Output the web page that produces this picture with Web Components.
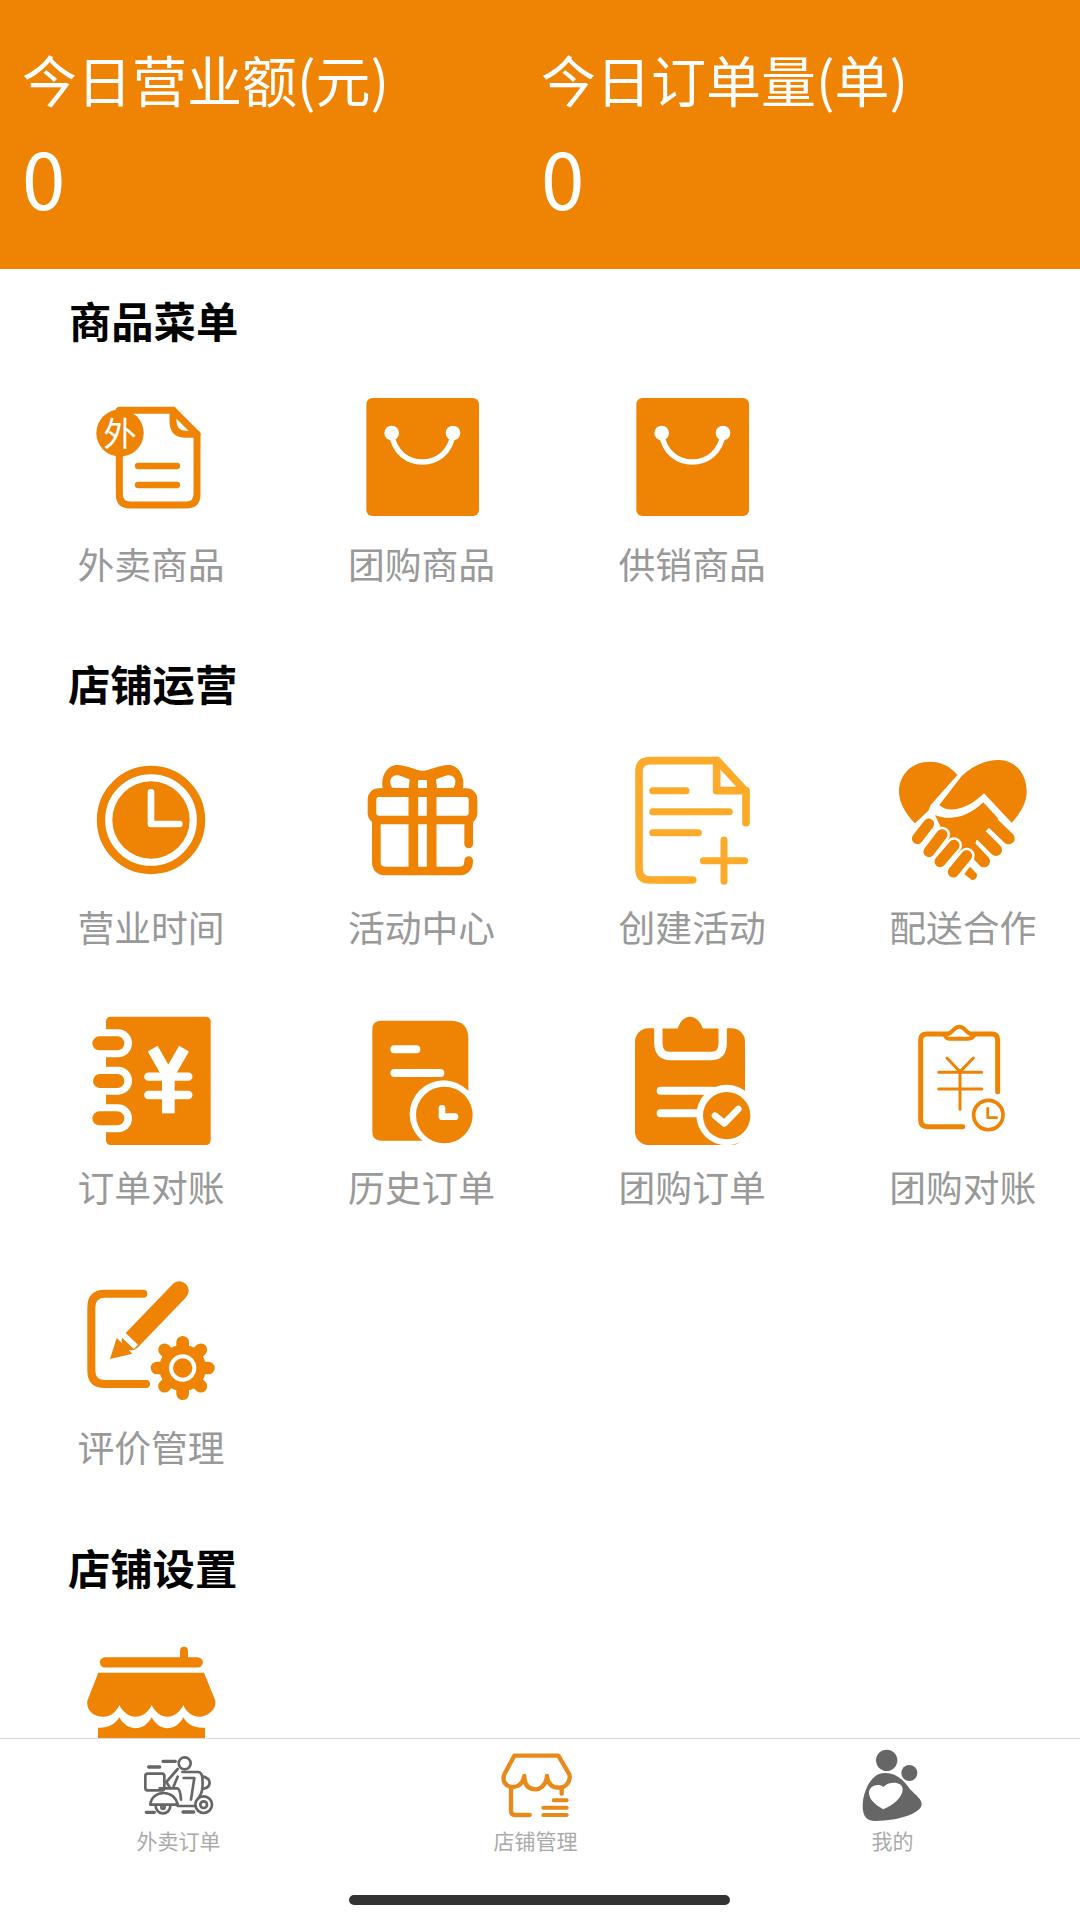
<!DOCTYPE html>
<html lang="zh-CN">
<head>
<meta charset="utf-8">
<title>店铺管理</title>
<style>
  html, body { margin: 0; padding: 0; background: #fff; }
  body { font-family: "Noto Sans CJK SC", "Noto Sans", sans-serif; }
</style>
</head>
<body>
<shop-app>
  <stat-bar slot="top">
    <stat-cell label="今日营业额(元)" value="0"></stat-cell>
    <stat-cell label="今日订单量(单)" value="0"></stat-cell>
  </stat-bar>

  <menu-section heading="商品菜单" style="--title-left:69px;--top:21px;--grid-top:42px">
    <menu-item label="外卖商品"><app-icon name="takeout"></app-icon></menu-item>
    <menu-item label="团购商品"><app-icon name="bag"></app-icon></menu-item>
    <menu-item label="供销商品"><app-icon name="bag"></app-icon></menu-item>
  </menu-section>

  <menu-section heading="店铺运营" style="--top:65px;--grid-top:42px">
    <menu-item label="营业时间"><app-icon name="clock"></app-icon></menu-item>
    <menu-item label="活动中心"><app-icon name="gift"></app-icon></menu-item>
    <menu-item label="创建活动"><app-icon name="newdoc"></app-icon></menu-item>
    <menu-item label="配送合作"><app-icon name="shake"></app-icon></menu-item>
    <menu-item label="订单对账"><app-icon name="ledger"></app-icon></menu-item>
    <menu-item label="历史订单"><app-icon name="history"></app-icon></menu-item>
    <menu-item label="团购订单"><app-icon name="clipcheck"></app-icon></menu-item>
    <menu-item label="团购对账"><app-icon name="clipyen"></app-icon></menu-item>
    <menu-item label="评价管理"><app-icon name="review"></app-icon></menu-item>
  </menu-section>

  <menu-section heading="店铺设置" style="--top:66px">
    <menu-item><app-icon name="store"></app-icon></menu-item>
  </menu-section>

  <tab-bar slot="bottom">
    <tab-item label="外卖订单"><app-icon name="scooter" w="80" h="70"></app-icon></tab-item>
    <tab-item label="店铺管理"><app-icon name="shopline" w="80" h="70"></app-icon></tab-item>
    <tab-item label="我的"><app-icon name="me" w="80" h="70"></app-icon></tab-item>
  </tab-bar>
</shop-app>

<script>
const ORANGE = '#ee8304'
const GREY = '#666'

// coordinates are taken from the 3x crops, so every viewBox is 390 wide for a 130 box
const ICONS = {
  takeout: ['0 0 390 390', `
    <g fill="none" stroke="${ORANGE}" stroke-width="21" stroke-linecap="round" stroke-linejoin="round">
      <path d="M100 55H261L333 127V307Q333 339 301 339H132Q100 339 100 307Z"/>
      <path d="M261 55V88Q261 127 300 127H333"/>
      <path d="M156 222H273M156 279H273" stroke-width="19"/>
    </g>
    <circle cx="102" cy="123" r="71" fill="${ORANGE}"/>
    <text x="102" y="161" font-size="100" text-anchor="middle" fill="#fff" font-family="Noto Sans CJK SC, sans-serif">外</text>`],
  bag: ['0 0 390 390', `
    <rect x="28" y="18" width="338" height="354" rx="18" fill="${ORANGE}"/>
    <path d="M103 123C112 186 156 210 196 210S280 186 289 123" fill="none" stroke="#fff" stroke-width="16"/>
    <circle cx="104" cy="123" r="22" fill="#fff"/><circle cx="288" cy="123" r="22" fill="#fff"/>`],
  clock: ['0 0 390 390', `
    <circle cx="195" cy="195" r="150" fill="none" stroke="${ORANGE}" stroke-width="25"/>
    <circle cx="195" cy="195" r="116" fill="${ORANGE}"/>
    <path d="M195 112V207H280" fill="none" stroke="#fff" stroke-width="20" stroke-linecap="round" stroke-linejoin="round"/>`],
  gift: ['890 45 390 390', `
    <path d="M970 157C955 105 985 75 1010 75C1040 75 1065 92 1087 92C1109 92 1135 75 1165 75C1190 75 1220 105 1205 157Z" fill="${ORANGE}"/>
    <path d="M995 143C982 120 995 105 1010 106C1020 106 1035 114 1048 118L1045 145Z" fill="#fff"/>
    <path d="M1180 143C1193 120 1180 105 1165 106C1155 106 1140 114 1127 118L1130 145Z" fill="#fff"/>
    <rect x="1073" y="120" width="27" height="25" rx="4" fill="#fff"/>
    <g fill="none" stroke="${ORANGE}" stroke-width="26" stroke-linecap="round" stroke-linejoin="round">
      <rect x="935" y="158" width="303" height="82" rx="20"/>
      <path d="M948 240V365Q948 393 976 393H1195Q1225 393 1225 362M1225 240V312"/>
      <path d="M1059 158V393M1114 158V393" stroke-linecap="butt" stroke-width="29"/>
    </g>`],
  newdoc: ['81 45 390 390', `
    <g fill="none" stroke="#fbab29" stroke-width="23" stroke-linecap="round" stroke-linejoin="round">
      <path d="M278 420H150Q117 420 117 387V95Q117 62 150 62H352L438 155V248"/>
      <path d="M350 62V152H438"/>
      <path d="M158 152H258M158 215H388M158 278H295" stroke-width="21"/>
      <path d="M372 300V424M310 362H434" stroke-width="21"/>
    </g>`],
  shake: ['894 45 390 390', `
    <g fill="${ORANGE}">
      <path d="M1072 105C1050 78 1020 65 990 65C935 65 897 105 897 155C897 190 920 225 945 250L985 212L992 195Z"/>
      <path d="M1085 108C1120 75 1160 60 1195 60C1245 60 1280 100 1280 155C1280 190 1260 220 1235 248L1152 160C1130 180 1110 198 1070 207C1050 211 1030 207 1018 195Z"/>
      <path d="M1005 225C1040 240 1095 240 1150 187L1195 236L1130 300L1100 372L1040 300Z"/>
    </g>
    <path d="M1160 232L1226 295M1122 264L1188 330M1088 296L1152 364" fill="none" stroke="${ORANGE}" stroke-width="36" stroke-linecap="round"/>
    <g fill="none" stroke-linecap="round">
      <path d="M986 252L952 296M1026 284L987 335M1062 316L1020 365M1100 347L1060 396" stroke="#fff" stroke-width="48"/>
      <path d="M986 252L952 296M1026 284L987 335M1062 316L1020 365M1100 347L1060 396" stroke="${ORANGE}" stroke-width="33"/>
    </g>
    <path d="M1093 402L1110 380L1131 402Q1132 420 1115 420Z" fill="${ORANGE}"/>`],
  ledger: ['78 45 390 390', `
    <rect x="138" y="50" width="314" height="385" rx="14" fill="${ORANGE}"/>
    <g fill="#fff"><rect x="100" y="88" width="116" height="84" rx="42"/><rect x="100" y="200" width="116" height="84" rx="42"/><rect x="100" y="313" width="116" height="84" rx="42"/></g>
    <g fill="${ORANGE}"><rect x="97" y="109" width="96" height="42" rx="21"/><rect x="99" y="222" width="94" height="42" rx="21"/><rect x="97" y="334" width="96" height="42" rx="21"/></g>
    <g fill="none" stroke="#fff">
      <path d="M278 146L325 228L372 146" stroke-width="34"/>
      <path d="M325 228V340" stroke-width="38"/>
      <path d="M265 230H385M265 285H385" stroke-width="25" stroke-linecap="round"/>
    </g>`],
  history: ['890 45 390 390', `
    <path d="M962 62H1170Q1224 62 1224 116V380L1150 422H962Q936 422 936 396V88Q936 62 962 62Z" fill="${ORANGE}"/>
    <path d="M1002 148H1068M1002 219H1140" stroke="#fff" stroke-width="24" stroke-linecap="round"/>
    <circle cx="1150" cy="343" r="102" fill="#fff"/>
    <circle cx="1152" cy="345" r="85" fill="${ORANGE}"/>
    <path d="M1145 325V350H1184" fill="none" stroke="#fff" stroke-width="20" stroke-linecap="round" stroke-linejoin="round"/>`],
  clipcheck: ['81 45 390 390', `
    <rect x="105" y="85" width="330" height="350" rx="40" fill="${ORANGE}"/>
    <path d="M175 70V130Q175 168 212 168H335Q368 168 368 130V70" fill="none" stroke="#fff" stroke-width="25"/>
    <rect x="160" y="60" width="222" height="25" fill="#fff"/>
    <path d="M232 88C240 62 255 50 270 50C285 50 300 62 310 88Z" fill="${ORANGE}"/>
    <path d="M182 272H340M182 340H340" stroke="#fff" stroke-width="24" stroke-linecap="round"/>
    <circle cx="380" cy="345" r="91" fill="#fff"/>
    <circle cx="380" cy="347" r="71" fill="${ORANGE}"/>
    <path d="M345 347L373 370L415 327" fill="none" stroke="#fff" stroke-width="20" stroke-linecap="round" stroke-linejoin="round"/>`],
  clipyen: ['894 45 390 390', `
    <g fill="none" stroke="${ORANGE}" stroke-linecap="round" stroke-linejoin="round">
      <path d="M1088 380H982Q962 380 962 360V120Q962 102 980 102H1176Q1193 102 1193 120V275" stroke-width="15"/>
      <path d="M1035 106Q1050 102 1060 90Q1078 70 1096 90Q1106 102 1122 106Q1118 116 1105 116H1050Q1038 116 1035 106Z" fill="#fff" stroke-width="12"/>
      <path d="M1041 174L1080 215L1120 174M1016 217H1145M1016 267H1145M1080 215V328" stroke-width="9"/>
      <circle cx="1165" cy="345" r="44" stroke-width="11" fill="#fff"/>
      <path d="M1163 325V353H1190" stroke-width="8"/>
    </g>`],
  review: ['78 48 390 390', `
    <path d="M250 104H135Q94 104 94 145V335Q94 375 135 375H258" fill="none" stroke="${ORANGE}" stroke-width="24" stroke-linecap="round"/>
    <path d="M213 246L358 95" fill="none" stroke="${ORANGE}" stroke-width="56" stroke-linecap="round"/>
    <rect x="176" y="234" width="60" height="18" fill="#fff" transform="rotate(44 206 243)"/>
    <path d="M170 237L217 284L150 300Z" fill="${ORANGE}"/>
    <g stroke="${ORANGE}" stroke-width="38" stroke-linecap="round">
      ${[0, 45, 90, 135, 180, 225, 270, 315].map(a => `<path d="M368 300V250" transform="rotate(${a} 368 327)"/>`).join('')}
    </g>
    <circle cx="368" cy="327" r="70" fill="${ORANGE}"/>
    <circle cx="368" cy="327" r="35" fill="${ORANGE}" stroke="#fff" stroke-width="12"/>`],
  store: ['78 18 390 390', `
    <path d="M135 97H413" stroke="${ORANGE}" stroke-width="31" stroke-linecap="round"/>
    <path d="M372 62V95" stroke="${ORANGE}" stroke-width="24" stroke-linecap="round"/>
    <path d="M115 128H432L466 212C470 240 440 260 418 260C395 260 378 245 370 225C360 248 340 260 322 260C300 260 285 245 275 225C265 248 245 260 226 260C205 260 188 245 178 225C168 248 150 260 130 260C100 260 78 240 82 212Z" fill="${ORANGE}"/>
    <path d="M114 293C140 295 165 285 178 262C190 285 210 295 226 295C245 295 262 285 275 262C288 285 305 295 322 295C340 295 358 285 370 262C382 285 405 295 435 293V400H114Z" fill="${ORANGE}"/>`],
  scooter: ['56 65 240 210', `
    <g fill="none" stroke="${GREY}" stroke-width="8" stroke-linecap="round" stroke-linejoin="round">
      <circle cx="193" cy="96" r="18"/>
      <path d="M128 90H165M85 107H118M78 243H102M188 242H220" stroke-width="10"/>
      <rect x="75" y="127" width="57" height="50" rx="7"/>
      <path d="M172 113L138 152L148 168M186 122H234Q246 124 246 142Q250 180 236 198"/>
      <path d="M172 136L160 165M190 140H222L212 205"/>
      <path d="M246 135Q268 140 268 155Q266 170 250 172"/>
      <path d="M118 171H172Q180 175 182 205"/>
      <path d="M90 220C92 198 110 185 130 185C152 185 168 200 172 220H90Z"/>
      <path d="M106 224A22 22 0 0 0 150 224"/>
      <circle cx="128" cy="228" r="5"/>
      <path d="M172 224H226"/>
      <circle cx="250" cy="220" r="25"/><circle cx="250" cy="220" r="10"/>
    </g>`],
  shopline: ['75 66 240 210', `
    <g fill="none" stroke="#e78a1a" stroke-width="13" stroke-linecap="round" stroke-linejoin="round">
      <path d="M130 74H262L295 130C300 150 285 170 265 170C245 170 230 160 228 135C225 165 205 175 195 175C175 175 160 165 160 135C155 160 140 168 125 168C105 168 92 150 100 130Z"/>
      <path d="M120 170V240Q120 252 132 252H176M272 170V188"/>
      <path d="M248 208H287M217 230H287M217 252H287" stroke-width="12"/>
    </g>`],
  me: ['1149 66 240 210', `
    <g fill="${GREY}">
      <circle cx="1250" cy="88" r="32"/><circle cx="1318" cy="126" r="24"/>
      <path d="M1225 130C1260 118 1295 135 1320 175C1340 195 1355 205 1355 220C1355 245 1290 270 1215 270C1190 270 1178 255 1178 225C1178 190 1195 145 1225 130Z"/>
    </g>
    <path d="M1240 235C1215 220 1197 205 1197 185C1197 165 1225 155 1240 168C1255 150 1298 150 1298 175C1298 200 1270 222 1240 235Z" fill="#fff"/>`]
}

class AppIcon extends HTMLElement {
  connectedCallback(){
    const w = this.getAttribute('w') || 130
    const h = this.getAttribute('h') || 130
    const [box, body] = ICONS[this.getAttribute('name')]
    const root = this.shadowRoot || this.attachShadow({mode: 'open'})
    root.innerHTML = `<style>
      :host{display:block;width:${w}px;height:${h}px}
      svg{display:block;overflow:visible}
    </style>
    <svg width="${w}" height="${h}" viewBox="${box}">${body}</svg>`
  }
}

class ShopApp extends HTMLElement {
  constructor(){
    super()
    this.attachShadow({mode: 'open'}).innerHTML = `<style>
      :host{display:flex;flex-direction:column;width:1080px;height:1920px;overflow:hidden;background:#fff}
      main{flex:1;min-height:0;overflow:hidden}
    </style>
    <slot name="top"></slot>
    <main><slot></slot></main>
    <slot name="bottom"></slot>`
  }
}

class StatBar extends HTMLElement {
  constructor(){
    super()
    this.attachShadow({mode: 'open'}).innerHTML = `<style>
      :host{display:grid;grid-template-columns:519px 1fr;height:269px;box-sizing:border-box;padding:43px 0 0 22px;background:${ORANGE};color:#fff}
    </style><slot></slot>`
  }
}

class StatCell extends HTMLElement {
  constructor(){
    super()
    this.attachShadow({mode: 'open'}).innerHTML = `<style>
      :host{display:block}
      .label{font-size:55px;line-height:70px;white-space:nowrap}
      .value{font-size:78px;line-height:100px;margin-top:13px}
    </style>
    <div class="label">${this.getAttribute('label')}</div>
    <div class="value">${this.getAttribute('value')}</div>`
  }
}

class MenuSection extends HTMLElement {
  constructor(){
    super()
    this.attachShadow({mode: 'open'}).innerHTML = `<style>
      :host{display:block;padding-top:var(--top,66px)}
      h2{margin:0 0 0 var(--title-left,68px);font-size:42.3px;line-height:60px;font-weight:700;color:#000}
      .grid{display:grid;grid-template-columns:repeat(4,270.6px);row-gap:64px;padding-left:15.7px;margin-top:var(--grid-top,39px)}
    </style>
    <h2>${this.getAttribute('heading')}</h2>
    <div class="grid"><slot></slot></div>`
  }
}

class MenuItem extends HTMLElement {
  constructor(){
    super()
    const label = this.getAttribute('label')
    this.attachShadow({mode: 'open'}).innerHTML = `<style>
      :host{display:flex;flex-direction:column;align-items:center;gap:16px}
      .label{font-size:36.8px;line-height:50px;color:#999;white-space:nowrap}
    </style>
    <slot></slot>
    ${label ? `<div class="label">${label}</div>` : ''}`
  }
}

class TabBar extends HTMLElement {
  constructor(){
    super()
    this.attachShadow({mode: 'open'}).innerHTML = `<style>
      :host{display:block;height:182px;box-sizing:border-box;border-top:1px solid #d9d9d9;padding-top:14px;background:#fff}
      .tabs{display:grid;grid-template-columns:repeat(3,357px)}
      .home{width:381px;height:10px;border-radius:5px;background:#333;margin:40px 0 0 349px}
    </style>
    <div class="tabs"><slot></slot></div>
    <div class="home"></div>`
  }
}

class TabItem extends HTMLElement {
  constructor(){
    super()
    this.attachShadow({mode: 'open'}).innerHTML = `<style>
      :host{display:flex;flex-direction:column;align-items:center;gap:2px}
      .label{font-size:21px;line-height:30px;color:#aaa}
    </style>
    <slot></slot>
    <div class="label">${this.getAttribute('label')}</div>`
  }
}

customElements.define('app-icon', AppIcon)
customElements.define('shop-app', ShopApp)
customElements.define('stat-bar', StatBar)
customElements.define('stat-cell', StatCell)
customElements.define('menu-section', MenuSection)
customElements.define('menu-item', MenuItem)
customElements.define('tab-bar', TabBar)
customElements.define('tab-item', TabItem)
</script>
</body>
</html>
